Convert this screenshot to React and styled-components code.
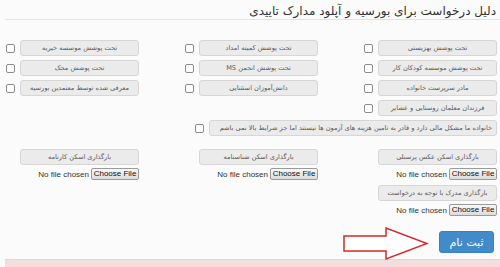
import React from "react";
import styled, { createGlobalStyle } from "styled-components";

const GlobalStyle = createGlobalStyle`
  html, body { margin: 0; padding: 0; background: #fbfbfb; }
  body { font-family: "DejaVu Sans", "Noto Sans", sans-serif; }
  * { box-sizing: border-box; }
`;

const Page = styled.div`
  width: 500px;
  height: 267px;
  overflow: hidden;
  direction: rtl;
  display: flex;
  flex-direction: column;
  background: #fbfbfb;
`;

const Header = styled.h3`
  margin: 0 0 0 5px;
  height: 21px;
  padding: 3px 4px 0 0;
  font-size: 12px;
  font-weight: normal;
  line-height: 16px;
  color: #333;
  border-bottom: 1px solid #e3e3e3;
  white-space: nowrap;
`;

const Grid = styled.div`
  display: grid;
  grid-template-columns: repeat(3, 179px);
  padding-right: 3px;
  margin-top: ${(p) => p.$top}px;
  row-gap: ${(p) => p.$gap}px;
`;

const Option = styled.label`
  display: flex;
  align-items: center;
  gap: 5px;
  grid-column: ${(p) => (p.$wide ? "1 / -1" : "auto")};
`;

const Tag = styled.span`
  display: flex;
  align-items: center;
  justify-content: ${(p) => (p.$wide ? "flex-start" : "center")};
  width: ${(p) => (p.$wide ? 288 : 119)}px;
  height: 16px;
  padding: 0 4px;
  background: #ebebeb;
  border: 1px solid #d6d6d6;
  border-radius: 3px;
  color: #5a5a5a;
  font-size: 6.6px;
  white-space: nowrap;
  overflow: hidden;
`;

const Check = styled.input.attrs({ type: "checkbox" })`
  appearance: none;
  margin: 0;
  width: 9px;
  height: 9px;
  border: 1px solid #8c8c8c;
  border-radius: 2px;
  background: #fff;
`;

const Upload = styled.div`
  display: flex;
  flex-direction: column;
  align-items: flex-start;
  gap: 3px;
`;

const FileRow = styled.label`
  display: flex;
  align-items: center;
  gap: 2px;
  height: 12px;
  font-family: "Liberation Sans", Arial, sans-serif;
  font-size: 8px;
  color: #333;
  input { display: none; }
`;

const FileButton = styled.span`
  display: flex;
  align-items: center;
  justify-content: center;
  width: 48px;
  height: 12px;
  border: 1px solid #9a9a9a;
  border-radius: 2px;
  background: linear-gradient(#f8f8f8, #dcdcdc);
  color: #111;
  font-size: 8px;
  line-height: 1;
`;

const Footer = styled.div`
  position: relative;
  display: flex;
  margin-top: 15px;
  padding-right: 6px;
  height: 22px;
`;

const Submit = styled.button`
  width: 55px;
  height: 22px;
  padding: 0;
  border: 1px solid #3a7fc0;
  border-radius: 3px;
  background: #428bca;
  color: #fff;
  font-family: "DejaVu Sans", sans-serif;
  font-size: 11px;
`;

const Arrow = styled.svg`
  position: absolute;
  left: 343px;
  top: -4px;
`;

const Alert = styled.div`
  margin: 6px 0 0 5px;
  height: 8px;
  background: #f2dede;
  border-top: 1px solid #ebd1d1;
`;

const options = [
  "تحت پوشش بهزیستی",
  "تحت پوشش کمیته امداد",
  "تحت پوشش موسسه خیریه",
  "تحت پوشش موسسه کودکان کار",
  "تحت پوشش انجمن MS",
  "تحت پوشش محک",
  "مادر سرپرست خانواده",
  "دانش‌آموزان استثنایی",
  "معرفی شده توسط معتمدین بورسیه",
  "فرزندان معلمان روستایی و عشایر",
];

const uploads = [
  "بارگذاری اسکن عکس پرسنلی",
  "بارگذاری اسکن شناسنامه",
  "بارگذاری اسکن کارنامه",
  "بارگذاری مدرک با توجه به درخواست",
];

export default function App() {
  return (
    <Page>
      <GlobalStyle />
      <Header>دلیل درخواست برای بورسیه و آپلود مدارک تاییدی</Header>
      <Grid $top={20} $gap={4}>
        {options.map((o) => (
          <Option key={o}>
            <Tag>{o}</Tag>
            <Check />
          </Option>
        ))}
        <Option $wide>
          <Tag $wide>
            خانواده ما مشکل مالی دارد و قادر به تامین هزینه های آزمون ها نیستند اما جز شرایط بالا نمی باشم
          </Tag>
          <Check />
        </Option>
      </Grid>
      <Grid $top={13} $gap={5}>
        {uploads.map((u) => (
          <Upload key={u}>
            <Tag>{u}</Tag>
            <FileRow>
              <input type="file" />
              <FileButton>Choose File</FileButton>
              <span>No file chosen</span>
            </FileRow>
          </Upload>
        ))}
      </Grid>
      <Footer>
        <Submit>ثبت نام</Submit>
        <Arrow width="86" height="34" viewBox="0 0 86 34">
          <polygon
            points="1,9 43,9 43,1 84,16.5 43,32 43,24 1,24"
            fill="#fff"
            stroke="#d42a2a"
            strokeWidth="1.5"
            strokeLinejoin="miter"
          />
        </Arrow>
      </Footer>
      <Alert />
    </Page>
  );
}
